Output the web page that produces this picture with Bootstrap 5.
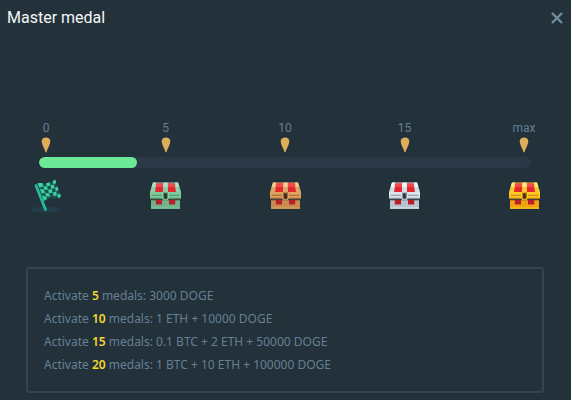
<!DOCTYPE html>
<html lang="en">
<head>
<meta charset="utf-8">
<meta name="viewport" content="width=device-width, initial-scale=1">
<title>Master medal</title>
<link href="https://cdn.jsdelivr.net/npm/bootstrap@5.3.0/dist/css/bootstrap.min.css" rel="stylesheet">
<style>
body{background:#23313b;color:#658092;font-family:Roboto,"Liberation Sans",sans-serif;font-size:12px;line-height:16px}
.title{font-size:16px;line-height:24px;color:#f4f6f7;font-weight:400}
.dialog-head{padding:6px 7px}
.close-btn{color:#708da0;line-height:0}
.dialog-body{padding:84px 27px 8px 26px}
.stop{width:40px}
.pin{margin-top:1px}
.track{height:11px;margin:4px 13px 14px;border-radius:6px;background:#2b3946}
.track .progress-bar{border-radius:6px;background:#6be996}
.rewards{margin-top:51px;padding:15px 16px;border:2px solid #34444f;border-radius:3px;font-family:"Noto Sans",Roboto,sans-serif}
.rewards li{line-height:23px}
.count{color:#f5d72f;font-weight:600}
.green{--top:#8cceaa;--hi:#b4dfcb;--band:#7fcb9b;--edge:#4c9268;--base:#6fb68c}
.bronze{--top:#dfa365;--hi:#f2cc97;--band:#dfa25f;--edge:#9c6433;--base:#c98c50}
.silver{--top:#d2dde8;--hi:#f3f7fb;--band:#dce4ec;--edge:#8593a1;--base:#b9c4d1}
.gold{--top:#fbc52d;--hi:#ffe886;--band:#ffca25;--edge:#c97f0a;--base:#f0a20f}
</style>
<script src="https://cdn.jsdelivr.net/npm/bootstrap@5.3.0/dist/js/bootstrap.bundle.min.js"></script>
</head>
<body>
<svg class="d-none" aria-hidden="true">
<symbol id="pin" viewBox="0 0 10 16"><path d="M5 .5C7.500 .5 9.300 2 9.300 4.600C9.300 8 6.300 11.500 5.500 15.300H4.500C3.700 11.500 .7 8 .7 4.600C.7 2 2.500 .5 5 .5Z" fill="#dfae59"/></symbol>
<symbol id="chest" viewBox="0 0 31 27">
<path d="M3 .5H28L31 10H0Z" fill="var(--top)"/>
<path d="M3 .5H6L4.500 5H1.600ZM25 .5H28L29.400 5H26.500ZM13.500 .5H17.500V5H13.500Z" fill="var(--hi)"/>
<path d="M6.500 1.500H13V10H5ZM18 1.500H24.500L26 10H18Z" fill="#e3282d"/>
<path d="M6.500 1.500H13V5H5.900ZM18 1.500H24.500L25.100 5H18Z" fill="#f5484a"/>
<path d="M1 17H30V26.500H1Z" fill="var(--base)"/>
<path d="M1 17H30V18.300H1Z" fill="#47403b"/>
<path d="M5.800 18H12V22.500H5.800ZM19 18H25.200V22.500H19Z" fill="#b92029"/>
<path d="M1 25.500H30V26.800H1Z" fill="var(--band)"/>
<path d="M0 10H31V16.500H0Z" fill="var(--band)"/>
<path d="M1.500 12.700H29.500V13.700H1.500ZM0 15.700H31V16.700H0Z" fill="var(--edge)"/>
<path d="M12 10H19V16L17.500 18.200H13.500L12 16Z" fill="var(--top)"/>
<path d="M13 10.500H18V16L16.700 17.500H14.300L13 16Z" fill="var(--edge)"/>
<path d="M14.200 11.500H16.700V16.500H14.200Z" fill="#2c2922"/>
</symbol>
</svg>
<main>
<header class="dialog-head d-flex align-items-center justify-content-between">
<h1 class="title m-0">Master medal</h1>
<button type="button" class="close-btn btn p-0 border-0" aria-label="Close"><svg width="14" height="14" viewBox="0 0 14 14"><path d="M2 2L12 12M12 2L2 12" stroke="currentColor" stroke-width="2.400"/></svg></button>
</header>
<section class="dialog-body">
<div class="d-flex justify-content-between text-center">
<div class="stop d-flex flex-column align-items-center">0<svg class="pin" width="10" height="16"><use href="#pin"/></svg></div>
<div class="stop d-flex flex-column align-items-center">5<svg class="pin" width="10" height="16"><use href="#pin"/></svg></div>
<div class="stop d-flex flex-column align-items-center">10<svg class="pin" width="10" height="16"><use href="#pin"/></svg></div>
<div class="stop d-flex flex-column align-items-center">15<svg class="pin" width="10" height="16"><use href="#pin"/></svg></div>
<div class="stop d-flex flex-column align-items-center">max<svg class="pin" width="10" height="16"><use href="#pin"/></svg></div>
</div>
<div class="track progress" role="progressbar" aria-label="Medals activated" aria-valuenow="20" aria-valuemin="0" aria-valuemax="100"><div class="progress-bar" style="width:20%"></div></div>
<div class="d-flex justify-content-between">
<div class="stop d-flex justify-content-center"><svg width="32" height="34" viewBox="0 0 32 34" overflow="visible">
<ellipse cx="16" cy="27.500" rx="15" ry="3" fill="#213f4b"/>
<g transform="translate(0 -1)">
<path d="M7 2Q12 5 16 2.500Q21 2 25 -1L30.500 15.500Q27 18 22 17Q17 17.500 13.500 20.500Z" fill="#205048"/>
<g fill="#35d3a5"><path d="M7.500 2L12.500 2L13.500 5L9.500 7ZM16 2.300L19.500 1.300L20.500 4.500L17 5.500ZM22.700 0L25.300 -1.500L26.300 2L23.500 3.500ZM13.200 5.200L17 5.500L18 8.700L14.300 8.800ZM20.500 4.500L23.500 3.500L24.800 7L21.500 8ZM10 8L14 8.500L15 12L11.500 12.500ZM18 8.700L21.500 8L22.700 11.500L19 12.200ZM25 7L27.500 5.500L28.500 8.800L26 10.500ZM15 12L19 12.200L20 15.500L16.200 15.500ZM22.700 11.500L26 10.500L27 14L24 15.300ZM12.300 14.500L16 15.500L17 18L13.700 20Z"/><path d="M27 14L30 12.500L31 15.500L28.500 17.500Z"/></g>
<path d="M6 4.500L15.500 28.500" stroke="#26b99b" stroke-width="2.800" stroke-linecap="round"/></g></svg></div>
<div class="stop d-flex justify-content-center"><svg class="green" width="31" height="27"><use href="#chest"/></svg></div>
<div class="stop d-flex justify-content-center"><svg class="bronze" width="31" height="27"><use href="#chest"/></svg></div>
<div class="stop d-flex justify-content-center"><svg class="silver" width="31" height="27"><use href="#chest"/></svg></div>
<div class="stop d-flex justify-content-center"><svg class="gold" width="31" height="27"><use href="#chest"/></svg></div>
</div>
<ul class="rewards list-unstyled mb-0">
<li>Activate <span class="count">5</span> medals: 3000 DOGE</li>
<li>Activate <span class="count">10</span> medals: 1 ETH + 10000 DOGE</li>
<li>Activate <span class="count">15</span> medals: 0.1 BTC + 2 ETH + 50000 DOGE</li>
<li>Activate <span class="count">20</span> medals: 1 BTC + 10 ETH + 100000 DOGE</li>
</ul>
</section>
</main>
</body>
</html>
